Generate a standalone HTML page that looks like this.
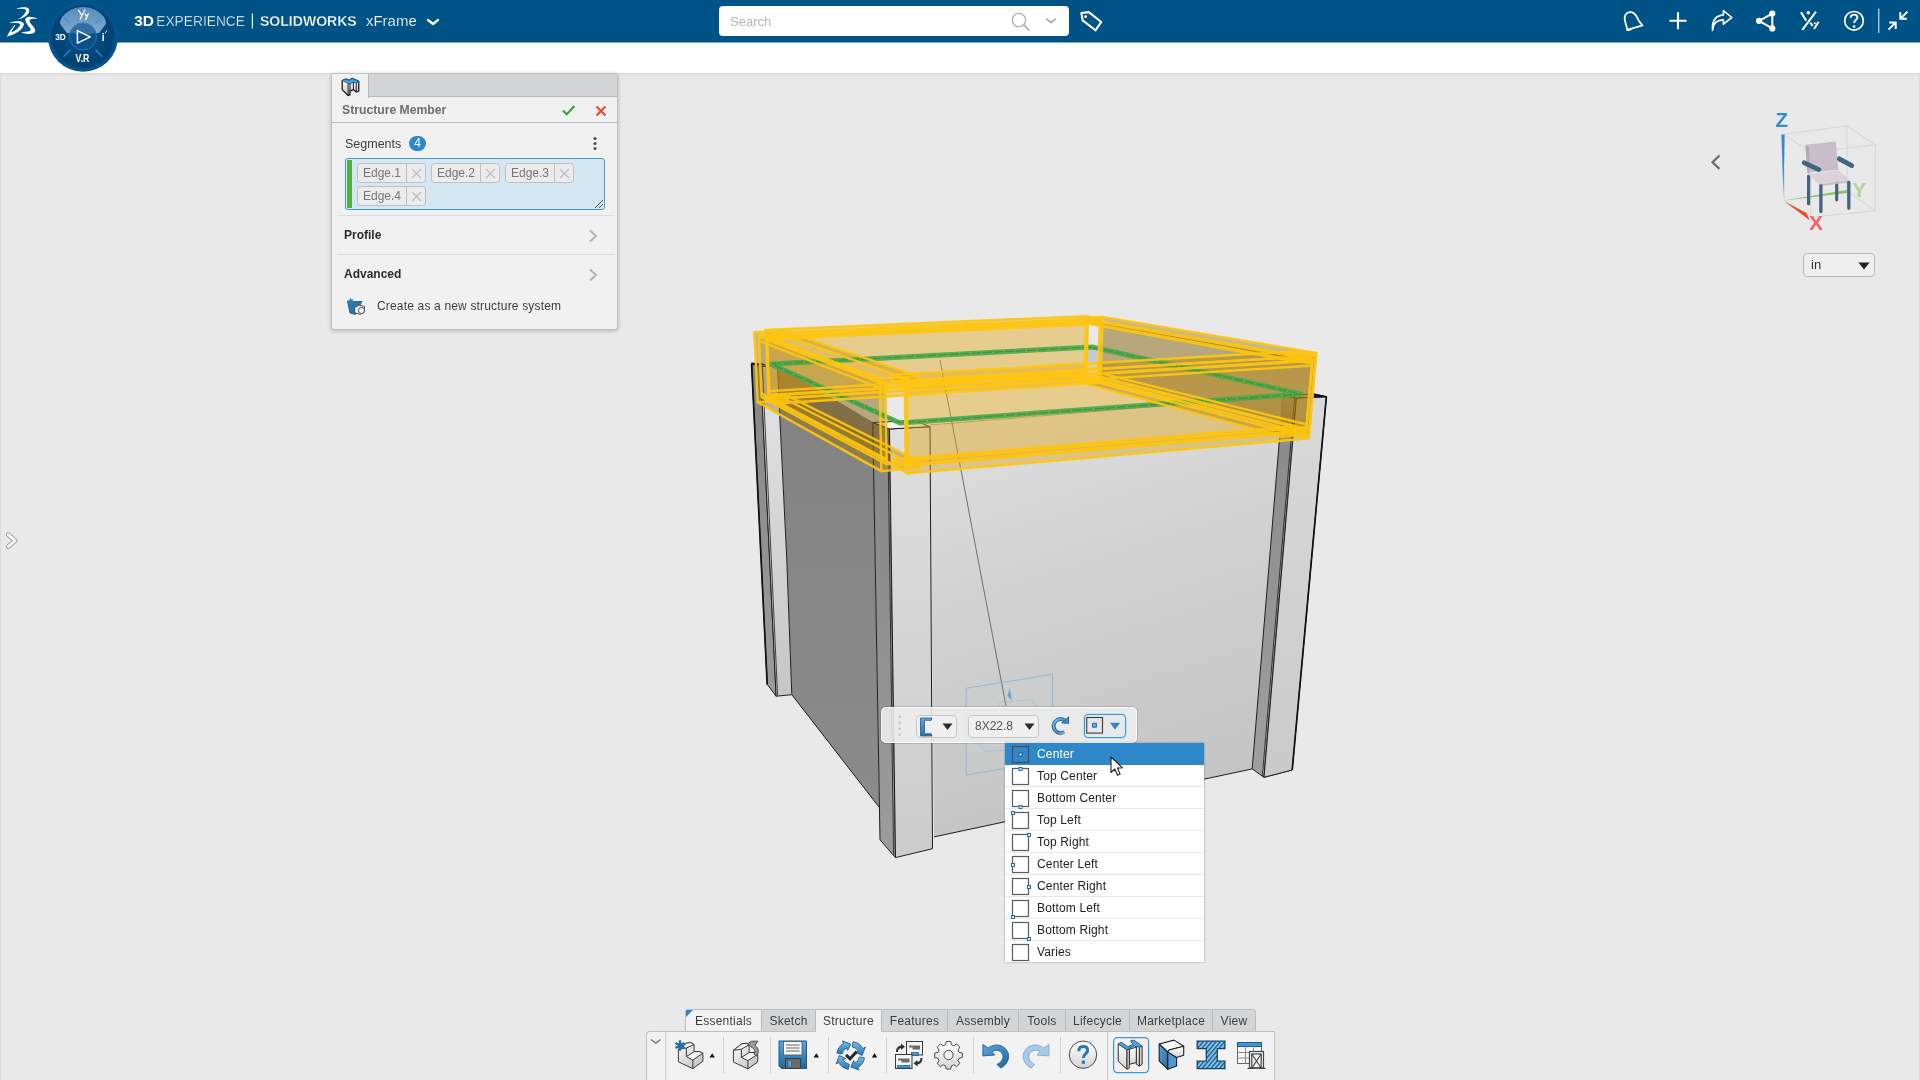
<!DOCTYPE html>
<html lang="en">
<head>
<meta charset="utf-8">
<title>3DEXPERIENCE | SOLIDWORKS xFrame</title>
<style>
*{box-sizing:border-box;margin:0;padding:0}
html,body{width:1920px;height:1080px;overflow:hidden;background:#e9e9e9;font-family:"Liberation Sans",sans-serif;font-size:12px;color:#3d3d3d}
.abs{position:absolute}
#root{position:absolute;left:0;top:0;width:1920px;height:1080px;overflow:hidden;will-change:opacity}
#hdr{position:absolute;left:0;top:0;width:1920px;height:42px;background:#005386}
#band{position:absolute;left:0;top:42px;width:1920px;height:31px;background:#fff;box-shadow:0 1px 2px rgba(0,0,0,.10)}
#title{position:absolute;left:134px;top:10px;height:22px;line-height:22px;color:#fff;font-size:15.5px;white-space:nowrap}
#search{position:absolute;left:719px;top:6px;width:350px;height:30px;background:#fff;border-radius:4px}
#search span{position:absolute;left:11px;top:0;line-height:31px;font-size:13px;color:#b4b4b4}
/* left panel */
#panel{position:absolute;left:331px;top:73px;width:287px;height:257px;background:#f1f1f1;border:1px solid #bfbfbf;border-radius:3px;box-shadow:0 1px 4px rgba(0,0,0,.22)}
#ptabs{position:absolute;left:0;top:0;width:285px;height:23px;background:#d3d4d6;border-bottom:1px solid #babbbd;border-radius:2px 2px 0 0}
#ptab{position:absolute;left:0;top:0;width:37px;height:24px;background:#f1f1f1;border-right:1px solid #babbbd;border-radius:2px 0 0 0}
#ptitle{position:absolute;left:0;top:24px;width:285px;height:25px;border-bottom:1px solid #bcbdbf}
#ptitle b{position:absolute;left:10px;top:0;line-height:25px;font-size:12.200px;color:#6e6f73}
.lbl{position:absolute;white-space:nowrap;line-height:16px}
#selbox{position:absolute;left:13px;top:84px;width:260px;height:52px;background:#d6e7f4;border:1px solid #3f9bd8;border-radius:3px}
#selbox i{position:absolute;left:1px;top:1px;width:5px;height:48px;background:#57ab45}
.chip{position:absolute;height:19.600px;width:69px;border:1px solid #c0c0c0;border-radius:3.500px;background:#ececec;color:#757575;font-size:12px;line-height:18.600px;margin-top:-.7px}
.chip span{position:absolute;left:5px;top:0}
.chip em{position:absolute;left:48px;top:0;width:1px;height:17.600px;background:#c0c0c0}
.chip svg{position:absolute;left:52.500px;top:3.800px}
.hr{position:absolute;left:5px;width:278px;height:1px;background:#dcdcdc}
/* bottom bar */
#tabs{position:absolute;left:685px;top:1009px;height:22px;width:571px}
.tab{position:absolute;top:0;height:22px;background:#d4d5d7;border:1px solid #bbbcbe;border-bottom:none;border-left:none;font-size:12px;line-height:23px;text-align:center;color:#3d3d3d;letter-spacing:.25px}
.tab.on{background:#f2f2f2}
#tbar{position:absolute;left:646px;top:1031px;width:629px;height:49px;background:#f2f2f2;border:1px solid #bebfc1;border-bottom:none;border-radius:4px 0 0 0}
.sep{position:absolute;top:6px;width:1px;height:36px;background:#d2d2d2}
/* floating */
#ftb{position:absolute;left:881px;top:707px;width:256px;height:36px;background:rgba(238,238,238,.88);border:1px solid rgba(255,255,255,.75);border-radius:5px;box-shadow:0 0 0 1px rgba(0,0,0,.13)}
.fb{position:absolute;top:7px;height:23px;border:1px solid #c6c6c6;border-radius:4px;background:#f0f0f0}
#dd{position:absolute;left:1005px;top:743px;width:199px;height:219px;background:#fff;box-shadow:0 0 2px rgba(0,0,0,.35);overflow:hidden}
.row{position:absolute;left:0;width:199px;height:22px;border-bottom:1px solid #e9e9e9;font-size:12px;line-height:23px;color:#222;letter-spacing:.15px}
.row span{position:absolute;left:32px;top:0}
.row svg{position:absolute;left:6px;top:1px}
.row.sel{background:#2d87c9;color:#fff;border-bottom-color:#2d87c9}
#unit{position:absolute;left:1803px;top:253px;width:72px;height:24px;border:1px solid #b9b9b9;border-radius:4px;background:#efefef;font-size:13px;line-height:22px;color:#333}
</style>
</head>
<body>
<div id="root">
<svg class="abs" style="left:0;top:0" width="1920" height="1080" viewBox="0 0 1920 1080">
<defs>
<linearGradient id="pf" x1="0" y1="0" x2="0.25" y2="1"><stop offset="0" stop-color="#e2e2e2"/><stop offset="0.45" stop-color="#d2d2d2"/><stop offset="1" stop-color="#c5c5c5"/></linearGradient>
<linearGradient id="pl" x1="0" y1="0" x2="0" y2="1"><stop offset="0" stop-color="#828282"/><stop offset="1" stop-color="#8b8b8b"/></linearGradient>
<linearGradient id="ll" x1="0" y1="0" x2="0" y2="1"><stop offset="0" stop-color="#e4e4e4"/><stop offset="1" stop-color="#c6c6c6"/></linearGradient>
<linearGradient id="ld" x1="0" y1="0" x2="0" y2="1"><stop offset="0" stop-color="#858585"/><stop offset="1" stop-color="#9c9c9c"/></linearGradient>
<linearGradient id="ldr" x1="0" y1="0" x2="0" y2="1"><stop offset="0" stop-color="#bdbdbd"/><stop offset=".13" stop-color="#8b8b8b"/><stop offset="1" stop-color="#a0a0a0"/></linearGradient>
<linearGradient id="llr" x1="0" y1="0" x2="0" y2="1"><stop offset="0" stop-color="#dadada"/><stop offset="1" stop-color="#cacaca"/></linearGradient>
<linearGradient id="llf" x1="0" y1="0" x2="0" y2="1"><stop offset="0" stop-color="#dfdfdf"/><stop offset="1" stop-color="#cccccc"/></linearGradient>
</defs>
<polygon points="777.5,366.0 872.8,422.5 879.2,807.3 791.8,694.7 786.8,560.0 779.7,415.0" fill="url(#pl)" stroke="none"/>
<polyline points="879.2,807.3 791.8,694.7" fill="none" stroke="#1e1e1e" stroke-width="1"/>
<polyline points="777.5,366.0 872.8,422.5" fill="none" stroke="#4a3a10" stroke-width=".6" opacity=".6"/>
<polygon points="930.0,425.0 1283.0,396.0 1279.5,438.6 1252.2,768.9 934.0,836.9" fill="url(#pf)" stroke="none"/>
<polyline points="1252.2,768.9 934.0,836.9" fill="none" stroke="#1e1e1e" stroke-width="1"/>
<polyline points="930.0,425.0 1283.0,396.0" fill="none" stroke="#6a5320" stroke-width=".7" opacity=".7"/>
<polygon points="751.6,364.0 760.5,366.5 776.1,696.2 767.2,684.4" fill="url(#ld)" stroke="#1e1e1e" stroke-width="1" stroke-linejoin="round"/>
<polygon points="760.5,366.5 777.5,365.5 779.7,415.0 786.8,560.0 791.8,694.7 776.1,696.2" fill="url(#ll)" stroke="#1e1e1e" stroke-width="1" stroke-linejoin="round"/>
<polyline points="762.3,366.5 777.6,695.5" fill="none" stroke="#1e1e1e" stroke-width=".8"/>
<polygon points="872.8,422.5 889.5,429.0 895.5,857.6 880.0,839.8" fill="url(#ld)" stroke="#1e1e1e" stroke-width="1" stroke-linejoin="round"/>
<polygon points="889.5,429.0 930.0,426.7 932.5,848.7 895.5,857.6" fill="url(#llf)" stroke="#1e1e1e" stroke-width="1" stroke-linejoin="round"/>
<polygon points="872.8,422.5 889.5,429.0 930.0,426.7 914.0,420.5" fill="#f1f1f1" stroke="#1e1e1e" stroke-width="1" stroke-linejoin="round"/>
<polyline points="887.8,428.5 893.6,855.5" fill="none" stroke="#1e1e1e" stroke-width=".8"/>
<polygon points="1283.0,396.0 1296.4,398.0 1264.0,777.3 1252.2,768.9" fill="url(#ldr)" stroke="none"/>
<polyline points="1279.5,438.6 1252.2,768.9 1264.0,777.3 1292.2,770.0" fill="none" stroke="#1e1e1e" stroke-width="1"/>
<polyline points="1296.4,398.0 1264.0,777.3" fill="none" stroke="#1e1e1e" stroke-width="1"/>
<polyline points="1283.0,396.0 1279.5,438.6" fill="none" stroke="#5a4a20" stroke-width=".7" opacity=".6"/>
<polygon points="1296.4,398.0 1326.4,396.5 1292.2,770.0 1264.0,777.3" fill="url(#llr)" stroke="#1e1e1e" stroke-width="1" stroke-linejoin="round"/>
<polygon points="1283.0,396.0 1296.4,398.0 1326.4,396.5 1313.0,393.9" fill="#e8e8e8" stroke="#1e1e1e" stroke-width="1" stroke-linejoin="round"/>
<polyline points="1294.6,398.0 1262.3,776.2" fill="none" stroke="#1e1e1e" stroke-width=".8"/>
<polygon points="1086.5,347.0 1097.5,349.0 1097.0,362.0 1086.3,362.0" fill="#c6c9d2" stroke="none"/>
<polyline points="1086.5,346.8 1097.5,348.8" fill="none" stroke="#222" stroke-width="1.6"/>
<polyline points="751.6,364.0 767.2,684.4" fill="none" stroke="#111" stroke-width="1.7"/>
<polyline points="751.2,363.6 765.0,364.6" fill="none" stroke="#111" stroke-width="2"/>
<polyline points="1326.4,396.5 1292.2,770.0" fill="none" stroke="#111" stroke-width="1.7"/>
<polygon points="1313.3,393.2 1326.9,396.3 1325.2,397.6 1313.3,397.6" fill="#111" stroke="none"/>
<polyline points="940.0,360.0 1006.0,706.0" fill="none" stroke="#555" stroke-width=".8"/>
<g fill="none" stroke="#8fb5d4" stroke-width=".9"><polygon points="966.2,688.3 1052.6,674.2 1052.6,760.5 966.2,775" fill="rgba(200,220,238,.04)"/><path d="M1000.200 702.400L1030.300 699.700L1046 716L1040 748L986.300 751.500L978.500 744.300Z" stroke="#9dbfd9" stroke-width=".8"/></g>
<path d="M1009.800 688.300L1007.400 696.100L1011.900 700.300z" fill="#6fa3cf"/>
<g stroke="none">
<polygon points="754.3,332.2 879.7,378.6 918.9,376.3 784.7,330.8" fill="rgba(215,160,20,.20)"/>
<polygon points="784.7,330.8 918.9,376.3 919.0,382.8 784.9,335.8" fill="rgba(128,92,0,.27)"/>
<polygon points="784.9,335.8 919.0,382.8 885.4,384.9 758.9,336.9" fill="rgba(215,160,20,.20)"/>
<polygon points="758.9,336.9 885.4,384.9 886.7,464.3 761.7,397.2" fill="rgba(128,92,0,.27)"/>
<polygon points="761.7,397.2 886.7,464.3 919.6,461.5 787.3,395.6" fill="rgba(215,160,20,.20)"/>
<polygon points="787.3,395.6 919.6,461.5 919.6,467.8 787.5,400.3" fill="rgba(128,92,0,.27)"/>
<polygon points="787.5,400.3 919.6,467.8 881.3,471.1 757.7,402.2" fill="rgba(215,160,20,.20)"/>
<polygon points="757.7,402.2 881.3,471.1 879.7,378.6 754.3,332.2" fill="rgba(128,92,0,.27)"/>
<polygon points="754.3,332.2 784.7,330.8 784.9,335.8 758.9,336.9 761.7,397.2 787.3,395.6 787.5,400.3 757.7,402.2" fill="rgba(200,150,10,.25)"/>
<polygon points="879.7,378.6 918.9,376.3 919.0,382.8 885.4,384.9 886.7,464.3 919.6,461.5 919.6,467.8 881.3,471.1" fill="rgba(200,150,10,.25)"/>
<polygon points="906.8,380.2 1316.1,355.7 1293.1,351.6 892.2,374.9" fill="rgba(215,160,20,.20)"/>
<polygon points="892.2,374.9 1293.1,351.6 1292.6,357.4 892.3,381.4" fill="rgba(226,166,18,.245)"/>
<polygon points="892.3,381.4 1292.6,357.4 1312.3,360.9 904.8,386.0" fill="rgba(215,160,20,.20)"/>
<polygon points="904.8,386.0 1312.3,360.9 1306.1,431.9 905.7,465.9" fill="rgba(226,166,18,.245)"/>
<polygon points="905.7,465.9 1306.1,431.9 1286.9,426.9 893.5,459.5" fill="rgba(215,160,20,.20)"/>
<polygon points="893.5,459.5 1286.9,426.9 1286.4,432.4 893.6,465.7" fill="rgba(226,166,18,.245)"/>
<polygon points="893.6,465.7 1286.4,432.4 1308.8,438.4 907.8,473.4" fill="rgba(215,160,20,.20)"/>
<polygon points="907.8,473.4 1308.8,438.4 1316.1,355.7 906.8,380.2" fill="rgba(226,166,18,.245)"/>
<polygon points="906.8,380.2 892.2,374.9 892.3,381.4 904.8,386.0 905.7,465.9 893.5,459.5 893.6,465.7 907.8,473.4" fill="rgba(200,150,10,.25)"/>
<polygon points="1316.1,355.7 1293.1,351.6 1292.6,357.4 1312.3,360.9 1306.1,431.9 1286.9,426.9 1286.4,432.4 1308.8,438.4" fill="rgba(200,150,10,.25)"/>
<polygon points="1316.3,352.9 1102.7,316.9 1080.4,317.9 1289.2,354.5" fill="rgba(215,160,20,.20)"/>
<polygon points="1289.2,354.5 1080.4,317.9 1080.3,322.4 1288.7,360.3" fill="rgba(128,92,0,.27)"/>
<polygon points="1288.7,360.3 1080.3,322.4 1099.9,321.5 1312.4,358.9" fill="rgba(215,160,20,.20)"/>
<polygon points="1312.4,358.9 1099.9,321.5 1097.9,376.2 1306.3,429.0" fill="rgba(128,92,0,.27)"/>
<polygon points="1306.3,429.0 1097.9,376.2 1078.6,377.4 1282.9,431.0" fill="rgba(215,160,20,.20)"/>
<polygon points="1282.9,431.0 1078.6,377.4 1078.5,381.9 1282.5,436.6" fill="rgba(128,92,0,.27)"/>
<polygon points="1282.5,436.6 1078.5,381.9 1100.5,380.5 1309.1,434.3" fill="rgba(215,160,20,.20)"/>
<polygon points="1309.1,434.3 1100.5,380.5 1102.7,316.9 1316.3,352.9" fill="rgba(128,92,0,.27)"/>
<polygon points="1316.3,352.9 1289.2,354.5 1288.7,360.3 1312.4,358.9 1306.3,429.0 1282.9,431.0 1282.5,436.6 1309.1,434.3" fill="rgba(200,150,10,.25)"/>
<polygon points="1102.7,316.9 1080.4,317.9 1080.3,322.4 1099.9,321.5 1097.9,376.2 1078.6,377.4 1078.5,381.9 1100.5,380.5" fill="rgba(200,150,10,.25)"/>
<polygon points="1086.3,316.1 765.6,330.0 773.7,332.9 1099.9,318.5" fill="rgba(215,160,20,.20)"/>
<polygon points="1099.9,318.5 773.7,332.9 773.9,337.9 1099.7,323.1" fill="rgba(226,166,18,.245)"/>
<polygon points="1099.7,323.1 773.9,337.9 766.9,335.3 1088.0,320.9" fill="rgba(215,160,20,.20)"/>
<polygon points="1088.0,320.9 766.9,335.3 769.6,394.9 1086.2,375.4" fill="rgba(226,166,18,.245)"/>
<polygon points="1086.2,375.4 769.6,394.9 776.5,398.6 1097.8,378.4" fill="rgba(215,160,20,.20)"/>
<polygon points="1097.8,378.4 776.5,398.6 776.7,403.5 1097.6,382.8" fill="rgba(226,166,18,.245)"/>
<polygon points="1097.6,382.8 776.7,403.5 768.7,399.1 1084.2,379.3" fill="rgba(215,160,20,.20)"/>
<polygon points="1084.2,379.3 768.7,399.1 765.6,330.0 1086.3,316.1" fill="rgba(226,166,18,.245)"/>
<polygon points="1086.3,316.1 1099.9,318.5 1099.7,323.1 1088.0,320.9 1086.2,375.4 1097.8,378.4 1097.6,382.8 1084.2,379.3" fill="rgba(200,150,10,.25)"/>
<polygon points="765.6,330.0 773.7,332.9 773.9,337.9 766.9,335.3 769.6,394.9 776.5,398.6 776.7,403.5 768.7,399.1" fill="rgba(200,150,10,.25)"/>
</g>
<polygon points="771.0,364.0 1092.0,347.0 1301.0,394.0 900.0,423.0" fill="none" stroke="#46a84b" stroke-width="5" stroke-linejoin="round" opacity=".9"/>
<polygon points="771.0,364.0 1092.0,347.0 1301.0,394.0 900.0,423.0" fill="none" stroke="#3a9440" stroke-width="1.200" stroke-linejoin="round" opacity=".9"/>
<polygon points="771.0,364.0 1092.0,347.0 1301.0,394.0 900.0,423.0" fill="none" stroke="#d9a441" stroke-width="1.300" stroke-dasharray="0.1 11" stroke-linecap="round" opacity=".9"/>
<g fill="none" stroke="#ffc60d" stroke-width="2.4" stroke-linejoin="round" stroke-linecap="round" opacity=".93">
<polyline points="754.3,332.2 879.7,378.6"/>
<polyline points="784.7,330.8 918.9,376.3"/>
<polyline points="784.9,335.8 919.0,382.8"/>
<polyline points="758.9,336.9 885.4,384.9"/>
<polyline points="761.7,397.2 886.7,464.3"/>
<polyline points="787.3,395.6 919.6,461.5"/>
<polyline points="787.5,400.3 919.6,467.8"/>
<polyline points="757.7,402.2 881.3,471.1"/>
<polyline points="762.7,336.8 890.3,384.6"/>
<polyline points="759.0,340.9 885.5,390.1"/>
<polyline points="761.5,393.3 886.6,459.2"/>
<polyline points="765.4,396.9 891.5,463.9"/>
<polyline points="754.3,332.2 784.7,330.8 784.9,335.8 758.9,336.9 761.7,397.2 787.3,395.6 787.5,400.3 757.7,402.2 754.3,332.2"/>
<polyline points="879.7,378.6 918.9,376.3 919.0,382.8 885.4,384.9 886.7,464.3 919.6,461.5 919.6,467.8 881.3,471.1 879.7,378.6"/>
<polyline points="906.8,380.2 1316.1,355.7"/>
<polyline points="892.2,374.9 1293.1,351.6"/>
<polyline points="892.3,381.4 1292.6,357.4"/>
<polyline points="904.8,386.0 1312.3,360.9"/>
<polyline points="905.7,465.9 1306.1,431.9"/>
<polyline points="893.5,459.5 1286.9,426.9"/>
<polyline points="893.6,465.7 1286.4,432.4"/>
<polyline points="907.8,473.4 1308.8,438.4"/>
<polyline points="902.9,385.3 1309.4,360.4"/>
<polyline points="904.8,391.3 1311.9,365.6"/>
<polyline points="905.6,460.8 1306.5,427.3"/>
<polyline points="903.9,465.0 1303.2,431.1"/>
<polyline points="906.8,380.2 892.2,374.9 892.3,381.4 904.8,386.0 905.7,465.9 893.5,459.5 893.6,465.7 907.8,473.4 906.8,380.2"/>
<polyline points="1316.1,355.7 1293.1,351.6 1292.6,357.4 1312.3,360.9 1306.1,431.9 1286.9,426.9 1286.4,432.4 1308.8,438.4 1316.1,355.7"/>
<polyline points="1316.3,352.9 1102.7,316.9"/>
<polyline points="1289.2,354.5 1080.4,317.9"/>
<polyline points="1288.7,360.3 1080.3,322.4"/>
<polyline points="1312.4,358.9 1099.9,321.5"/>
<polyline points="1306.3,429.0 1097.9,376.2"/>
<polyline points="1282.9,431.0 1078.6,377.4"/>
<polyline points="1282.5,436.6 1078.5,381.9"/>
<polyline points="1309.1,434.3 1100.5,380.5"/>
<polyline points="1309.5,359.1 1097.4,321.7"/>
<polyline points="1312.0,363.5 1099.7,325.2"/>
<polyline points="1306.7,424.5 1098.0,372.7"/>
<polyline points="1303.4,429.3 1095.5,376.4"/>
<polyline points="1316.3,352.9 1289.2,354.5 1288.7,360.3 1312.4,358.9 1306.3,429.0 1282.9,431.0 1282.5,436.6 1309.1,434.3 1316.3,352.9"/>
<polyline points="1102.7,316.9 1080.4,317.9 1080.3,322.4 1099.9,321.5 1097.9,376.2 1078.6,377.4 1078.5,381.9 1100.5,380.5 1102.7,316.9"/>
<polyline points="1086.3,316.1 765.6,330.0"/>
<polyline points="1099.9,318.5 773.7,332.9"/>
<polyline points="1099.7,323.1 773.9,337.9"/>
<polyline points="1088.0,320.9 766.9,335.3"/>
<polyline points="1086.2,375.4 769.6,394.9"/>
<polyline points="1097.8,378.4 776.5,398.6"/>
<polyline points="1097.6,382.8 776.7,403.5"/>
<polyline points="1084.2,379.3 768.7,399.1"/>
<polyline points="1089.7,321.3 767.9,335.7"/>
<polyline points="1087.9,324.5 767.1,339.3"/>
<polyline points="1086.3,371.9 769.4,391.1"/>
<polyline points="1087.9,375.8 770.6,395.5"/>
<polyline points="1086.3,316.1 1099.9,318.5 1099.7,323.1 1088.0,320.9 1086.2,375.4 1097.8,378.4 1097.6,382.8 1084.2,379.3 1086.3,316.1"/>
<polyline points="765.6,330.0 773.7,332.9 773.9,337.9 766.9,335.3 769.6,394.9 776.5,398.6 776.7,403.5 768.7,399.1 765.6,330.0"/>
</g>
</svg>
<div id="hdr"></div>
<div id="band"></div>
<div class="abs" style="left:0;top:42px;width:1920px;height:1px;background:#7fa9c2"></div>
<svg class="abs" style="left:0;top:0" width="130" height="76" viewBox="0 0 130 76">
<defs>
<radialGradient id="cg" cx="50%" cy="45%" r="60%"><stop offset="0" stop-color="#0b5690"/><stop offset="0.7" stop-color="#024577"/><stop offset="1" stop-color="#013b69"/></radialGradient>
<linearGradient id="hl" x1="0" y1="0" x2="0" y2="1"><stop offset="0" stop-color="#5d93c2"/><stop offset="1" stop-color="#8db2d3"/></linearGradient>
<clipPath id="cc"><circle cx="83" cy="36.6" r="31.2"/></clipPath>
</defs>
<!-- DS logo -->
<g fill="#fff" stroke="none">
<path d="M16.800 8.500C20 7.400 24.500 6.900 27.200 7.700C29.600 8.500 29.800 10.800 28.600 13C27.200 15.600 23.500 18.200 17.900 19.600C21.500 17.400 24.300 14.600 25.600 12C26.500 10.200 25.800 9.400 24 9.100C21.800 8.800 19 8.800 16.800 8.900Z"/>
<path d="M10.100 22.400C13.500 21.300 17.500 20.900 20.500 21.400C23.200 21.900 24.300 23.200 23.800 25C22.800 28.900 17.500 33.800 6.800 36.800C9 32.500 11.500 28.300 14.600 25L15.400 25.300C13.600 27.800 12.200 30.300 11.300 32.400C15.500 30.600 19.300 27.300 20.100 24.900C20.500 23.700 19.700 23.400 18.200 23.200C15.800 22.900 12.800 23 10.300 23.100Z"/>
<path d="M37 18.500C34 17.200 30.500 16.400 28 16.900C25.800 17.400 24.800 18.900 25.300 20.600C25.900 23 28.300 26 30.300 28.600C31.200 29.900 30.600 30.800 29 31.200C27 31.700 24 31.900 21.100 32.400C24.500 33.600 28.500 34.200 31.200 33.800C34 33.400 35.800 32 35.200 29.800C34.400 27 31 24.600 29.900 22C29.300 20.500 29.600 19.600 30.800 19.200C32.500 18.600 35 18.700 37 18.900Z"/>
</g>
<!-- compass -->
<circle cx="83" cy="36.600" r="35.100" fill="#00518a"/>
<circle cx="83" cy="36.600" r="33.800" fill="none" stroke="#0a62a3" stroke-width="0.900" opacity=".7"/>
<circle cx="83" cy="36.600" r="31.200" fill="url(#cg)"/>
<g clip-path="url(#cc)"><path d="M60.500 24.500c-2.500-6 8-17.500 22.500-17.500s25 11.500 22.500 17.500l-6.500 8.500h-32z" fill="url(#hl)" opacity=".92"/></g>
<g stroke="#2b96dd" stroke-width="1.100" stroke-linecap="round">
<path d="M63.900 17.400l5.500 5.500M101.400 17.400l-5.500 5.500M63.900 56.300l6.200-6.300M102 56.300l-6.200-6.300"/></g>
<circle cx="83" cy="36.500" r="13.500" fill="#0b5189" stroke="#1b76ba" stroke-width="1"/>
<path d="M70.300 32.500a13 13 0 0 1 25.400 0a22 9 0 0 1 -25.400 0z" fill="#4b82b3" opacity=".6"/>
<path d="M77.400 30.600v12.600l12.800-6.300z" fill="none" stroke="#fff" stroke-width="1.500" stroke-linejoin="round"/>
<g fill="#fff" font-family="Liberation Sans, sans-serif" font-weight="bold">
<text x="55.200" y="40.300" font-size="9.500" textLength="10.500" lengthAdjust="spacingAndGlyphs">3D</text>
<text x="75.600" y="61.600" font-size="10" textLength="13.800" lengthAdjust="spacingAndGlyphs">V.R</text>
<text x="101.800" y="41" font-size="10.500">i</text>
</g>
<path d="M105.300 33.200l1.500-2.600" stroke="#fff" stroke-width="0.900"/>
<g stroke="#fff" stroke-width="1.300" fill="none" stroke-linecap="round"><path d="M78.600 10.200l2.400 4.200M84.800 9.800l-4.600 9.300M85 14.200l1.500 2M88.300 13.800l-2.600 5.500"/></g>
</svg>
<svg class="abs" style="left:130px;top:8px" width="300" height="26" viewBox="130 8 300 26" fill="#fff" font-family="Liberation Sans, sans-serif" font-size="15.3">
<text x="134.300" y="26" font-weight="bold" textLength="19.700" lengthAdjust="spacingAndGlyphs">3D</text>
<text x="156.200" y="26" textLength="88.800" lengthAdjust="spacingAndGlyphs" stroke="#005386" stroke-width=".35">EXPERIENCE</text>
<rect x="251.800" y="13.500" width="1.100" height="15" />
<text x="260" y="26" font-weight="bold" textLength="96.700" lengthAdjust="spacingAndGlyphs" stroke="#005386" stroke-width=".3">SOLIDWORKS</text>
<text x="366" y="26" textLength="50.700" lengthAdjust="spacingAndGlyphs" stroke="#005386" stroke-width=".2">xFrame</text>
</svg>
<svg class="abs" style="left:426px;top:16.700px" width="14" height="10" viewBox="0 0 14 10"><path d="M2 3l5 4 5-4" fill="none" stroke="#fff" stroke-width="2.300" stroke-linecap="round" stroke-linejoin="round"/></svg>
<div id="search"><span>Search</span>
<svg class="abs" style="left:291px;top:5px" width="22" height="22" viewBox="0 0 22 22"><circle cx="9" cy="9" r="6.700" fill="none" stroke="#b0b0b0" stroke-width="1.300"/><path d="M13.800 13.800l5 5.200" stroke="#b0b0b0" stroke-width="1.800" stroke-linecap="round"/></svg>
<svg class="abs" style="left:326px;top:11px" width="12" height="8" viewBox="0 0 12 8"><path d="M1.500 2l4.500 3.500L10.500 2" fill="none" stroke="#b0b0b0" stroke-width="1.600" stroke-linecap="round" stroke-linejoin="round"/></svg>
</div>
<svg class="abs" style="left:1078px;top:9.500px" width="27" height="25" viewBox="0 0 26 24"><path d="M3.200 2.800l7.200-.8 12 9.500-5.600 8-12.300-9.600z" fill="none" stroke="#fff" stroke-width="2" stroke-linejoin="round"/><circle cx="7.300" cy="6.300" r="1.400" fill="#fff"/></svg>
<!-- right icons -->
<svg class="abs" style="left:1615px;top:5px" width="300" height="32" viewBox="1615 5 300 32" fill="none" stroke="#fff" stroke-width="1.800" stroke-linecap="round" stroke-linejoin="round">
<!-- bell -->
<path d="M1627.300 29.800c-.5-4.500-3.300-8.500-2.600-12.800.7-4 4.300-5.600 7.400-4.600 3.600 1.100 4.600 4.300 6.300 7.600 1.100 2.100 2.600 3.800 4.100 5.400z"/>
<path d="M1627.300 29.800c1 .8 2.800.3 3.500-.8" />
<!-- plus -->
<path d="M1678 12.300v17M1669.500 20.800h17" stroke-width="2.100" stroke-linecap="butt"/>
<!-- share arrow -->
<path d="M1712.500 30.500c.1-6.400 3.600-10.300 10.900-10.600v4.300l8.400-6.700-8.400-6.800v4.200c-7.800.700-11.600 6.400-10.900 15.600z" stroke-width="1.600"/>
<!-- network -->
<g fill="#fff" stroke="none"><circle cx="1759" cy="20.800" r="3.100"/><circle cx="1772.300" cy="13.600" r="3.100"/><circle cx="1772.300" cy="28.400" r="3.100"/></g>
<path d="M1759 20.800l13.300-7.200v14.800z" stroke-width="2"/>
<!-- people -->
<g stroke-width="2"><path d="M1801 12.300l5.200 8.300M1816 11.600l-13.700 18.200M1810.300 22.600l2.300 3.300M1818.600 21.800l-4.600 7.200" stroke-linecap="butt"/></g>
<circle cx="1808.300" cy="12.700" r="1.700" fill="#fff" stroke="none"/>
<circle cx="1814.800" cy="23.200" r="1" fill="#fff" stroke="none"/>
<!-- help -->
<circle cx="1854" cy="20.800" r="9.300" stroke-width="1.700"/>
<path d="M1850.700 17.700c0-2 1.500-3.100 3.400-3.100s3.300 1.200 3.300 2.900c0 2.400-3.300 2.600-3.300 5.400" stroke-width="1.900" stroke-linecap="butt"/>
<circle cx="1854.100" cy="26.600" r="1.300" fill="#fff" stroke="none"/>
<!-- divider -->
<path d="M1878.800 9v23.500" stroke-width="1.100" stroke="#dfe8f0"/>
<!-- compress -->
<g stroke-width="2" stroke-linecap="butt" stroke-linejoin="miter"><path d="M1907.500 11.600l-7 7M1900.300 12.300v6.500h6.500M1888.500 29.600l7-7M1895.700 29v-6.500h-6.500"/></g>
</svg>

<div id="panel">
<div id="ptabs"></div><div id="ptab">
<svg class="abs" style="left:0;top:0" width="37" height="24" viewBox="332 74 37 24">
<defs><linearGradient id="tig" x1="0" y1="0" x2="0" y2="1"><stop offset="0" stop-color="#ffffff"/><stop offset="1" stop-color="#c9c9c9"/></linearGradient></defs>
<path d="M342.200 80.500L345.900 79.100L349.400 80.400L352.200 78.300L358.750 81.400V91.100L356.250 92L353.400 89.600L350 91.100V94.900L348.100 95.500L342.200 89.600Z" fill="url(#tig)" stroke="#1c1c1c" stroke-width="1.300" stroke-linejoin="round"/>
<path d="M342.200 80.500L345.900 79.100L349.400 80.400L352.200 78.300L358.750 81.400L356.250 83L353.400 82.100L350 83.900L348.100 83.300Z" fill="#4d9fdb" stroke="#1d5f95" stroke-width=".9" stroke-linejoin="round"/>
<path d="M348.100 83.300V95.500M350 83.900V91.100M353.400 82.100V89.600M356.250 83V92" stroke="#1c1c1c" stroke-width="1" fill="none"/>
</svg></div>
<div id="ptitle"><b>Structure Member</b>
<svg class="abs" style="left:228px;top:5px" width="18" height="14" viewBox="0 0 18 14"><path d="M3 7.500l3.700 3.700L14.500 3" fill="none" stroke="#3da33a" stroke-width="2.200"/></svg>
<svg class="abs" style="left:262px;top:6px" width="14" height="14" viewBox="0 0 14 14"><path d="M2.500 2.500l9 9M11.500 2.500l-9 9" fill="none" stroke="#e8472b" stroke-width="2.100"/></svg>
</div>
<div class="lbl" style="left:13px;top:62px;font-size:12.500px;color:#3d3d3d">Segments</div>
<div class="abs" style="left:77px;top:62px;width:17px;height:15px;border-radius:8px;background:#2e86cb;color:#fff;font-size:12px;line-height:15px;text-align:center">4</div>
<svg class="abs" style="left:259px;top:60px" width="8" height="20" viewBox="0 0 8 20" fill="#4a4a4a"><circle cx="4" cy="4.500" r="1.500"/><circle cx="4" cy="9.500" r="1.500"/><circle cx="4" cy="14.500" r="1.500"/></svg>
<div id="selbox"><i></i>
<div class="chip" style="left:11px;top:5px"><span>Edge.1</span><em></em><svg width="11" height="11" viewBox="0 0 11 11"><path d="M1 1l9 9M10 1l-9 9" stroke="#bdbdbd" stroke-width="1.250"/></svg></div>
<div class="chip" style="left:85px;top:5px"><span>Edge.2</span><em></em><svg width="11" height="11" viewBox="0 0 11 11"><path d="M1 1l9 9M10 1l-9 9" stroke="#bdbdbd" stroke-width="1.250"/></svg></div>
<div class="chip" style="left:159px;top:5px"><span>Edge.3</span><em></em><svg width="11" height="11" viewBox="0 0 11 11"><path d="M1 1l9 9M10 1l-9 9" stroke="#bdbdbd" stroke-width="1.250"/></svg></div>
<div class="chip" style="left:11px;top:28px"><span>Edge.4</span><em></em><svg width="11" height="11" viewBox="0 0 11 11"><path d="M1 1l9 9M10 1l-9 9" stroke="#bdbdbd" stroke-width="1.250"/></svg></div>
<svg class="abs" style="left:248px;top:40px" width="10" height="10" viewBox="0 0 10 10"><path d="M1 9l8-8M5 9l4-4" stroke="#555" stroke-width="1"/></svg>
</div>
<div class="hr" style="top:141px"></div>
<div class="lbl" style="left:12px;top:153px;font-weight:bold;font-size:12px;color:#2b2b2b">Profile</div>
<svg class="abs" style="left:256px;top:155px" width="11" height="14" viewBox="0 0 11 14"><path d="M2 1.500l6 5.500L2 12.500" fill="none" stroke="#b2b2b2" stroke-width="1.900"/></svg>
<div class="hr" style="top:180px"></div>
<div class="lbl" style="left:12px;top:192px;font-weight:bold;font-size:12px;color:#2b2b2b">Advanced</div>
<svg class="abs" style="left:256px;top:194px" width="11" height="14" viewBox="0 0 11 14"><path d="M2 1.500l6 5.500L2 12.500" fill="none" stroke="#b2b2b2" stroke-width="1.900"/></svg>
<svg class="abs" style="left:13px;top:221px" width="22" height="22" viewBox="0 0 22 22">
<path d="M2.500 6.500h14.500l-2 3.500v5l-4.500 1v3.500l-5.500-1.500z" fill="#2f77ae" stroke="#1d4f78" stroke-width=".8" stroke-linejoin="round"/>
<path d="M5.500 2.500l1 2.200 2.200-.6-1.300 2 1.600 1.600-2.300.2-.4 2.300-1.300-1.900-2.100.9.900-2.100-1.800-1.400 2.300-.5z" fill="#2b7fc0"/>
<path d="M9.500 12.500l4.500-2.500 5.500 1.500v5.500l-4.500 2.500-5.500-2z" fill="#e6e6e6" stroke="#444" stroke-width=".9" stroke-linejoin="round"/>
<circle cx="16.500" cy="15.500" r="3" fill="#f4f4f4" stroke="#444" stroke-width=".9"/>
</svg>
<div class="lbl" style="left:45px;top:224px;font-size:12px;color:#3d3d3d;letter-spacing:.17px">Create as a new structure system</div>
</div>

<svg class="abs" style="left:1700px;top:100px" width="200" height="140" viewBox="1700 100 200 140">
<path d="M1719.500 155.500l-7 6.700 7 6.700" fill="none" stroke="#6a6a6a" stroke-width="2.200"/>
<g fill="none" stroke="#d2d2d2" stroke-width=".9">
<path d="M1784 134.400L1846.900 125.900L1875.400 144.700L1810.600 151.900zM1784 200.500L1810.600 217.300L1875.400 210.800L1846.900 190.700zM1784 134.400V200.500M1810.600 151.900V217.300M1875.400 144.700V210.800M1846.900 125.900V190.700"/>
</g>
<path d="M1784.600 200.500L1846.900 189.900L1846.900 193z" fill="#8fc06a"/>
<path d="M1808.600 176v27.700M1836.700 181v18.800" stroke="#40657f" stroke-width="3.200" stroke-linecap="round"/>
<path d="M1805.400 144.700L1835.800 141.500L1838.400 170L1807.300 172.600z" fill="#c9bdc9"/>
<path d="M1805.400 144.700L1807.300 172.600L1809.300 174V147.500z" fill="#b5a9b6"/>
<path d="M1808 173.900L1839 170.600L1850 180.400L1819 184.300z" fill="#dbd2db"/>
<path d="M1819 184.300L1850 180.400V182.300L1819 186.300z" fill="#c3b8c4"/>
<path d="M1820.900 186v25.500M1848.800 182.500v25.700" stroke="#40657f" stroke-width="3.300" stroke-linecap="round"/>
<path d="M1804.300 162.800L1818.800 169.600M1839.300 158.800L1851.800 165.600" stroke="#3f6783" stroke-width="4.800" stroke-linecap="round"/>
<path d="M1781.400 134.400h3.300l-1.300 62z" fill="#2f8ed2"/>
<path d="M1784.600 201.500L1810 220.500L1806.500 213z" fill="#f04b32"/>
<g font-family="Liberation Sans, sans-serif" font-weight="bold">
<text x="1775.600" y="126.600" font-size="20.500" fill="#2f8ed2">Z</text>
<text x="1852.300" y="196.600" font-size="21" fill="#b3d39f">Y</text>
<text x="1809" y="230.300" font-size="21" fill="#f0646a">X</text>
</g>
</svg>
<div id="unit"><span class="abs" style="left:7px;top:0">in</span><svg class="abs" style="left:54px;top:8px" width="12" height="8" viewBox="0 0 12 8"><path d="M.5.500h11L6 7.500z" fill="#222"/></svg></div>
<svg class="abs" style="left:2px;top:528px" width="20" height="26" viewBox="0 0 20 26"><path d="M6.300 6.600l6.800 6L6.300 18.600" fill="none" stroke="#858585" stroke-width="4.600" stroke-linecap="round" stroke-linejoin="round"/><path d="M6.300 6.600l6.800 6L6.300 18.600" fill="none" stroke="#fff" stroke-width="3" stroke-linecap="round" stroke-linejoin="round"/></svg>
<div class="abs" style="left:0;top:73px;width:1px;height:1007px;background:#dcdcdc"></div>
<div class="abs" style="left:1919px;top:73px;width:1px;height:1007px;background:#dcdcdc"></div>

<div id="ftb">
<svg class="abs" style="left:15px;top:6px" width="6" height="24" viewBox="0 0 6 24" fill="#cbcbcb"><rect x="1.500" y="1.500" width="2.500" height="2.500"/><rect x="1.500" y="7.500" width="2.500" height="2.500"/><rect x="1.500" y="13.500" width="2.500" height="2.500"/><rect x="1.500" y="19.500" width="2.500" height="2.500"/></svg>
<div class="fb" style="left:34px;width:41px">
<svg class="abs" style="left:2px;top:1px" width="16" height="20" viewBox="0 0 16 20"><defs><linearGradient id="chg" x1="0" y1="0" x2="0" y2="1"><stop offset="0" stop-color="#63a9dc"/><stop offset="1" stop-color="#2a70a8"/></linearGradient></defs><path d="M1.500 1h11.500l-.8 2.300H5.500v13.400h6.700l.8 2.300H1.500z" fill="url(#chg)" stroke="#1f5f94" stroke-width=".8" stroke-linejoin="round"/></svg>
<svg class="abs" style="left:25px;top:7px" width="12" height="8" viewBox="0 0 12 8"><path d="M.5.500h10L5.500 7z" fill="#2c2c2c"/></svg></div>
<div class="fb" style="left:86px;width:71px"><span class="abs" style="left:6px;top:0;line-height:21px;font-size:12px;color:#555">8X22.8</span>
<svg class="abs" style="left:55px;top:7px" width="12" height="8" viewBox="0 0 12 8"><path d="M.5.500h10L5.500 7z" fill="#2c2c2c"/></svg></div>
<svg class="abs" style="left:0;top:0" width="254" height="34" viewBox="0 0 254 34"><defs><linearGradient id="rg" x1="0" y1="0" x2="1" y2="1"><stop offset="0" stop-color="#8ccaf0"/><stop offset=".6" stop-color="#3a88c4"/><stop offset="1" stop-color="#2a70a8" stop-opacity=".15"/></linearGradient><linearGradient id="rgs" x1="0" y1="0" x2="1" y2="1"><stop offset="0" stop-color="#1d5a8c"/><stop offset=".7" stop-color="#1d5a8c"/><stop offset="1" stop-color="#1d5a8c" stop-opacity="0"/></linearGradient></defs>
<path d="M184.92 12.36 A8.50 8.50 0 1 0 182.85 25.41 L181.35 22.81 A5.50 5.50 0 1 1 182.69 14.37 Z" fill="url(#rg)" stroke="url(#rgs)" stroke-width=".9"/>
<path d="M179.70 14.90 L186.60 15.30 L186.60 8.90 Z" fill="#3f8fcb" stroke="#1d5a8c" stroke-width=".9" stroke-linejoin="round"/></svg>
<div class="fb" style="left:201.500px;width:42px;top:5.800px;height:24px;border:1.400px solid #3c97d8;background:#e8e8e8;box-shadow:0 0 0 1px rgba(170,220,250,.7)">
<svg class="abs" style="left:0;top:0" width="40" height="22" viewBox="1084.900 715.200 40 22"><rect x="1086.600" y="717.700" width="15.800" height="15.600" fill="#e6e6e6" stroke="#483f3f" stroke-width="1.150"/><rect x="1092.500" y="723.600" width="3.800" height="3.800" rx=".8" fill="#6fb8ea" stroke="#2479bd" stroke-width="1.300"/><path d="M1110 722.900h10l-5.200 7.100z" fill="#2e86cb"/></svg></div>
</div>
<div id="dd">
<div class="row sel" style="top:0px"><svg width="20" height="21" viewBox="0 0 20 21"><rect x="1.500" y="2.500" width="16" height="16" fill="#2d87c9" stroke="#4a4a4a" stroke-width="1.200"/><rect x="8.0" y="9.0" width="3" height="3" fill="#fff" stroke="#155a94" stroke-width="1"/></svg><span>Center</span></div>
<div class="row" style="top:22px"><svg width="20" height="21" viewBox="0 0 20 21"><rect x="1.500" y="2.500" width="16" height="16" fill="#fff" stroke="#5a5a5a" stroke-width="1.200"/><rect x="8.0" y="1.5" width="3" height="3" fill="#d9eaf7" stroke="#1f6fb0" stroke-width="1"/></svg><span>Top Center</span></div>
<div class="row" style="top:44px"><svg width="20" height="21" viewBox="0 0 20 21"><rect x="1.500" y="2.500" width="16" height="16" fill="#fff" stroke="#5a5a5a" stroke-width="1.200"/><rect x="8.0" y="17.5" width="3" height="3" fill="#d9eaf7" stroke="#1f6fb0" stroke-width="1"/></svg><span>Bottom Center</span></div>
<div class="row" style="top:66px"><svg width="20" height="21" viewBox="0 0 20 21"><rect x="1.500" y="2.500" width="16" height="16" fill="#fff" stroke="#5a5a5a" stroke-width="1.200"/><rect x="0.5" y="1.5" width="3" height="3" fill="#d9eaf7" stroke="#1f6fb0" stroke-width="1"/></svg><span>Top Left</span></div>
<div class="row" style="top:88px"><svg width="20" height="21" viewBox="0 0 20 21"><rect x="1.500" y="2.500" width="16" height="16" fill="#fff" stroke="#5a5a5a" stroke-width="1.200"/><rect x="16.5" y="1.5" width="3" height="3" fill="#d9eaf7" stroke="#1f6fb0" stroke-width="1"/></svg><span>Top Right</span></div>
<div class="row" style="top:110px"><svg width="20" height="21" viewBox="0 0 20 21"><rect x="1.500" y="2.500" width="16" height="16" fill="#fff" stroke="#5a5a5a" stroke-width="1.200"/><rect x="0.5" y="9.5" width="3" height="3" fill="#d9eaf7" stroke="#1f6fb0" stroke-width="1"/></svg><span>Center Left</span></div>
<div class="row" style="top:132px"><svg width="20" height="21" viewBox="0 0 20 21"><rect x="1.500" y="2.500" width="16" height="16" fill="#fff" stroke="#5a5a5a" stroke-width="1.200"/><rect x="16.5" y="9.5" width="3" height="3" fill="#d9eaf7" stroke="#1f6fb0" stroke-width="1"/></svg><span>Center Right</span></div>
<div class="row" style="top:154px"><svg width="20" height="21" viewBox="0 0 20 21"><rect x="1.500" y="2.500" width="16" height="16" fill="#fff" stroke="#5a5a5a" stroke-width="1.200"/><rect x="0.5" y="17.5" width="3" height="3" fill="#d9eaf7" stroke="#1f6fb0" stroke-width="1"/></svg><span>Bottom Left</span></div>
<div class="row" style="top:176px"><svg width="20" height="21" viewBox="0 0 20 21"><rect x="1.500" y="2.500" width="16" height="16" fill="#fff" stroke="#5a5a5a" stroke-width="1.200"/><rect x="16.5" y="17.5" width="3" height="3" fill="#d9eaf7" stroke="#1f6fb0" stroke-width="1"/></svg><span>Bottom Right</span></div>
<div class="row" style="top:198px"><svg width="20" height="21" viewBox="0 0 20 21"><rect x="1.500" y="2.500" width="16" height="16" fill="#fff" stroke="#5a5a5a" stroke-width="1.200"/></svg><span>Varies</span></div>
</div>
<svg class="abs" style="left:1108px;top:755px" width="18" height="24" viewBox="0 0 18 24"><path d="M3 2v15.500l3.800-3.500 2.700 6.200 2.600-1.100-2.700-6 5.100-.300z" fill="#fff" stroke="#222" stroke-width="1.100" stroke-linejoin="round"/></svg>
<div id="tbar"></div>
<div id="tabs">
<div class="tab on" style="left:0px;width:77px;border-left:1px solid #bdbdbd;border-radius:3px 0 0 0;">Essentials</div>
<div class="tab" style="left:77px;width:54px;">Sketch</div>
<div class="tab on" style="left:131px;width:66px;height:23px;">Structure</div>
<div class="tab" style="left:197px;width:66px;">Features</div>
<div class="tab" style="left:263px;width:71px;">Assembly</div>
<div class="tab" style="left:334px;width:47px;">Tools</div>
<div class="tab" style="left:381px;width:64px;">Lifecycle</div>
<div class="tab" style="left:445px;width:83px;">Marketplace</div>
<div class="tab" style="left:528px;width:43px;border-radius:0 4px 0 0;">View</div>
<svg class="abs" style="left:1px;top:1px" width="8" height="8" viewBox="0 0 8 8"><path d="M0 0h7L0 7z" fill="#2e86cb"/></svg>
</div>
<svg class="abs" style="left:646px;top:1031px" width="630" height="49" viewBox="646 1031 630 49">
<defs>
<linearGradient id="g1" x1="0" y1="0" x2="1" y2="1"><stop offset="0" stop-color="#fafafa"/><stop offset="1" stop-color="#bdbdbd"/></linearGradient>
<linearGradient id="g2" x1="0" y1="0" x2="0" y2="1"><stop offset="0" stop-color="#5aa6dc"/><stop offset="1" stop-color="#1e669f"/></linearGradient>
<linearGradient id="g3" x1="0" y1="0" x2="0" y2="1"><stop offset="0" stop-color="#ffffff"/><stop offset="1" stop-color="#d5d5d5"/></linearGradient>
<pattern id="hat" width="3.300" height="3.300" patternUnits="userSpaceOnUse" patternTransform="rotate(-50)"><rect width="3.300" height="3.300" fill="#7fc6f0"/><rect width="3.300" height="1.250" fill="#1c4f7e"/></pattern>
<linearGradient id="g2u" x1="0" y1="0" x2="0" y2="1"><stop offset="0" stop-color="#7dbde8"/><stop offset="1" stop-color="#2a76b3"/></linearGradient>
<linearGradient id="g2c" x1="0" y1="0" x2="1" y2="1"><stop offset="0" stop-color="#5aa6dc"/><stop offset="1" stop-color="#22679f"/></linearGradient>
</defs>
<path d="M651 1039.500l4.800 3.600 4.800-3.600" fill="none" stroke="#777" stroke-width="1.500"/>
<path d="M665.800 1032v48" stroke="#c6c6c6" stroke-width="1"/>
<g stroke="#d0d0d0" stroke-width="1"><path d="M723.500 1037v36M770.500 1037v36M828.500 1037v36M886.500 1037v36M973.500 1037v36M1060.500 1037v36"/></g>
<path d="M1107.500 1032v48" stroke="#c6c6c6" stroke-width="1"/>
<!-- new part -->
<g stroke="#3a3a3a" stroke-width="1" stroke-linejoin="round">
<path d="M678.4 1049.2L686.6 1043.2L690.6 1042.5L694.1 1044.6L694.1 1051.7L699.2 1051.5L702.9 1053.2L702.9 1061.2L692.9 1068.7L678.4 1061.8Z" fill="url(#g1)"/>
<path d="M678.4 1049.2L686.6 1043.2L690.6 1042.5L694.1 1044.6L686.4 1048.0Z" fill="#fbfbfb"/>
<path d="M686.4 1056.6L694.1 1051.7L699.2 1051.5L702.9 1053.2L692.9 1060.1Z" fill="#f3f3f3"/>
<path d="M686.4 1048.0L686.4 1056.6M692.9 1060.1L692.9 1068.7" fill="none"/>
</g>
<path d="M680.0 1040.3 L680.0 1050.7M675.5 1042.9 L684.5 1048.1M684.5 1042.9 L675.5 1048.1" stroke="#1f6db0" stroke-width="2.300" fill="none"/>
<path d="M709.500 1057.500h5.400l-2.700-4.300z" fill="#111"/>
<!-- open -->
<g stroke="#3a3a3a" stroke-width="1" stroke-linejoin="round">
<path d="M733.4 1050.3L741.6 1044.0L746.2 1043.2L749.1 1044.8L749.1 1052.6L754.2 1052.4L757.7 1054.3L757.7 1062.0L747.9 1068.9L733.4 1062.0Z" fill="url(#g1)"/>
<path d="M733.4 1050.3L741.6 1044.0L746.2 1043.2L749.1 1044.8L741.4 1049.2Z" fill="#fbfbfb"/>
<path d="M741.4 1057.4L749.1 1052.6L754.2 1052.4L757.7 1054.3L747.9 1060.6Z" fill="#f3f3f3"/>
<path d="M741.4 1049.2L741.4 1057.4M747.9 1060.6L747.9 1068.9" fill="none"/>
</g>
<path d="M747.6 1043.7L751.7 1041.2L757.9 1041.2L755.1 1045.3C759.0 1048.6 759.0 1052.6 756.8 1055.8L754.0 1054.0C755.6 1051.3 754.8 1048.6 751.7 1047.5Z" fill="#9a9a9a" stroke="#444" stroke-width=".9" stroke-linejoin="round"/>
<!-- save -->
<path d="M779 1041h27.500v27.500h-25l-2.500-2.500z" fill="url(#g2)" stroke="#1b5c91" stroke-width="1"/>
<rect x="783.500" y="1041.500" width="18.500" height="13.500" fill="#f6f6f6" stroke="#555" stroke-width=".8"/>
<path d="M786 1045h13.500M786 1048h13.500M786 1051h13.500" stroke="#666" stroke-width="1"/>
<rect x="785.500" y="1058.500" width="15" height="10" fill="#6a6a6a" stroke="#333" stroke-width=".8"/>
<rect x="788" y="1060.500" width="3.500" height="6.500" fill="#5aa6dc" stroke="#1b5c91" stroke-width=".6"/>
<path d="M813.600 1057.500h5.400l-2.700-4.300z" fill="#111"/>
<!-- update -->
<g fill="url(#g2u)" stroke="#1b5c91" stroke-width=".9" stroke-linejoin="round">
<path d="M853.1 1041.7 A14.0 14.0 0 0 1 862.8 1048.5 L865.3 1047.1 L862.1 1055.5 L855.9 1052.5 L858.3 1051.1 A8.8 8.8 0 0 0 852.2 1046.8 Z"/>
<path d="M864.5 1057.9 A14.0 14.0 0 0 1 857.7 1067.6 L859.1 1070.0 L850.7 1066.9 L853.7 1060.7 L855.1 1063.1 A8.8 8.8 0 0 0 859.4 1057.0 Z"/>
<path d="M848.3 1069.3 A14.0 14.0 0 0 1 838.6 1062.5 L836.2 1063.9 L839.3 1055.5 L845.5 1058.5 L843.1 1059.9 A8.8 8.8 0 0 0 849.2 1064.2 Z"/>
<path d="M836.9 1053.1 A14.0 14.0 0 0 1 843.7 1043.4 L842.3 1040.9 L850.7 1044.1 L847.7 1050.3 L846.3 1047.9 A8.8 8.8 0 0 0 842.0 1054.0 Z"/>
</g>
<path d="M846.1 1054.9 L850.0 1058.8 L856.7 1051.5" fill="none" stroke="#2b2b2b" stroke-width="3"/>
<path d="M871.800 1057.500h5.400l-2.700-4.300z" fill="#111"/>
<!-- replace -->
<g stroke="#3a3a3a" stroke-width="1">
<rect x="906.500" y="1041.500" width="16" height="13.500" fill="#f4f4f4"/>
<path d="M909 1045.500h11v4h-7.500v-2h-3.500z" fill="#6b6b6b" stroke="none"/>
<rect x="911.500" y="1052.500" width="7" height="3" fill="#3f97d6" stroke="#1b5c91" stroke-width=".7"/>
<rect x="895.500" y="1054.500" width="16.500" height="14" fill="#f4f4f4"/>
<path d="M898 1058.500h11.500v4h-8v-2h-3.500z" fill="#6b6b6b" stroke="none"/>
<rect x="897.500" y="1065.500" width="12.500" height="2.500" fill="#3f97d6" stroke="#1b5c91" stroke-width=".7"/>
</g>
<g fill="#333"><path d="M896 1052c0-4 2-6 5-6.500v-2l4 3.300-4 3.200v-2c-2 .3-3 1.500-3 4z"/><path d="M922.500 1058c0 4-2 6-5 6.500v2l-4-3.300 4-3.200v2c2-.3 3-1.500 3-4z"/></g>
<!-- gear -->
<g transform="translate(948.500 1055)">
<path d="M-2.200-13.500h4.400l.8 3.300 2.300 1 2.900-1.800 3.100 3.100-1.800 2.900 1 2.300 3.300.8v4.400l-3.300.8-1 2.300 1.800 2.900-3.100 3.100-2.900-1.800-2.300 1-.8 3.300h-4.400l-.8-3.300-2.300-1-2.900 1.800-3.100-3.100 1.800-2.900-1-2.300-3.300-.8v-4.400l3.300-.8 1-2.300-1.800-2.900 3.100-3.100 2.900 1.800 2.300-1z" fill="url(#g3)" stroke="#4a4a4a" stroke-width="1" stroke-linejoin="round"/>
<circle r="4.600" fill="#f2f2f2" stroke="#4a4a4a" stroke-width="1"/></g>
<!-- undo -->
<path d="M 982.9 1044.5 L 982.9 1055.9 L 994.7 1055.1 L 992.1 1051.9 C 995.8 1048.2 1002.8 1051.1 1003.0 1056.3 C 1003.0 1060.3 1000.5 1062.6 997.0 1064.4 L 1000.7 1068.1 C 1005.7 1065.5 1008.8 1060.9 1008.6 1055.7 C 1008.0 1047.0 997.0 1041.2 988.3 1048.0 Z" fill="url(#g2c)" stroke="#1b5c91" stroke-width=".9" stroke-linejoin="round"/>
<!-- redo -->
<path d="M 1048.9 1044.5 L 1048.9 1055.9 L 1037.1 1055.1 L 1039.7 1051.9 C 1036.0 1048.2 1029.0 1051.1 1028.8 1056.3 C 1028.8 1060.3 1031.3 1062.6 1034.8 1064.4 L 1031.1 1068.1 C 1026.1 1065.5 1023.0 1060.9 1023.2 1055.7 C 1023.8 1047.0 1034.8 1041.2 1043.5 1048.0 Z" fill="#a6cbe8" stroke="#7aa9cc" stroke-width=".9" stroke-linejoin="round"/>
<!-- help -->
<circle cx="1083" cy="1054.700" r="13.700" fill="url(#g3)" stroke="#4a4a4a" stroke-width="1"/>
<path d="M1078.800 1051.200c0-3 1.800-4.700 4.500-4.700 2.600 0 4.300 1.600 4.300 3.900 0 3.400-4.200 3.700-4.200 7.500" fill="none" stroke="#2a79b9" stroke-width="3.100"/>
<rect x="1081.700" y="1060.600" width="3.300" height="3.200" fill="#2a79b9"/>
<!-- structure member (selected) -->
<rect x="1113.600" y="1037.600" width="35" height="35" rx="3.800" fill="#f6f0ec" stroke="#3f98d8" stroke-width="1.300"/>
<g stroke="#2a2a2a" stroke-width="1" stroke-linejoin="round">
<path d="M1136.3 1045.3L1139.4 1047.1L1139.4 1066.1L1136.3 1064.3Z" fill="url(#g3)"/>
<path d="M1139.4 1047.1L1142.1 1045.9L1142.1 1064.3L1139.4 1066.1Z" fill="#d9d9d9"/>
<path d="M1129.3 1049.3L1136.3 1047.1L1136.3 1062.5L1129.3 1064.3Z" fill="url(#g3)"/>
<path d="M1118.2 1044.0L1127.0 1049.7L1127.0 1069.2L1118.2 1061.2Z" fill="url(#g3)"/>
<path d="M1127.0 1049.7L1129.3 1048.6L1129.3 1067.9L1127.0 1069.2Z" fill="#e2e2e2"/>
<path d="M1118.2 1044.0L1121.1 1042.4L1127.7 1046.6L1133.0 1044.6L1130.6 1040.9L1133.7 1040.1L1142.1 1045.9L1139.4 1047.1L1134.4 1046.0L1129.1 1048.1L1129.3 1048.6L1127.0 1049.7Z" fill="#56a4dc" stroke="#1d5f95"/>
</g>
<!-- corner -->
<g stroke="#1f1f1f" stroke-width="1.100" stroke-linejoin="round">
<path d="M1159.2 1044.0L1167.8 1051.9L1167.8 1069.2L1159.2 1061.2Z" fill="url(#g2c)"/>
<path d="M1167.8 1051.9L1176.6 1057.5L1176.6 1066.1L1167.8 1069.2Z" fill="#4d9bd4"/>
<path d="M1159.2 1044.0L1174.0 1040.1L1183.7 1046.2L1169.1 1050.0L1167.8 1051.9Z" fill="#fbfbfb"/>
<path d="M1167.8 1051.9L1169.1 1050.0L1183.7 1046.2L1183.7 1055.2L1176.6 1057.5Z" fill="url(#g3)"/>
</g>
<!-- I beam -->
<path d="M1197.200 1041.200h27.700v7.400h-7.600v12.600h7.600v7.500h-27.700v-7.500h9.100v-12.600h-9.100z" fill="url(#hat)" stroke="#16456e" stroke-width="1.300"/>
<!-- table -->
<g stroke="#666" stroke-width="1"><rect x="1237.500" y="1042.500" width="24" height="21" fill="#f7f7f7"/><rect x="1237.500" y="1042.500" width="24" height="4" fill="#3f97d6" stroke="#1b5c91"/><path d="M1237.500 1052.500h24M1237.500 1058h24M1245.500 1046.500v17M1253.500 1046.500v17" fill="none" stroke="#8a8a8a"/></g>
<g stroke="#444" stroke-width="1.200" fill="none"><rect x="1249.500" y="1051.500" width="14" height="16.500" fill="#f5f5f5"/><rect x="1251.800" y="1054" width="9.400" height="14" /><path d="M1251.800 1054l9.400 14M1261.200 1054l-9.400 14M1247.500 1068.300h6.500M1259 1068.300h6.500"/></g>
</svg>
</div>
</body>
</html>
